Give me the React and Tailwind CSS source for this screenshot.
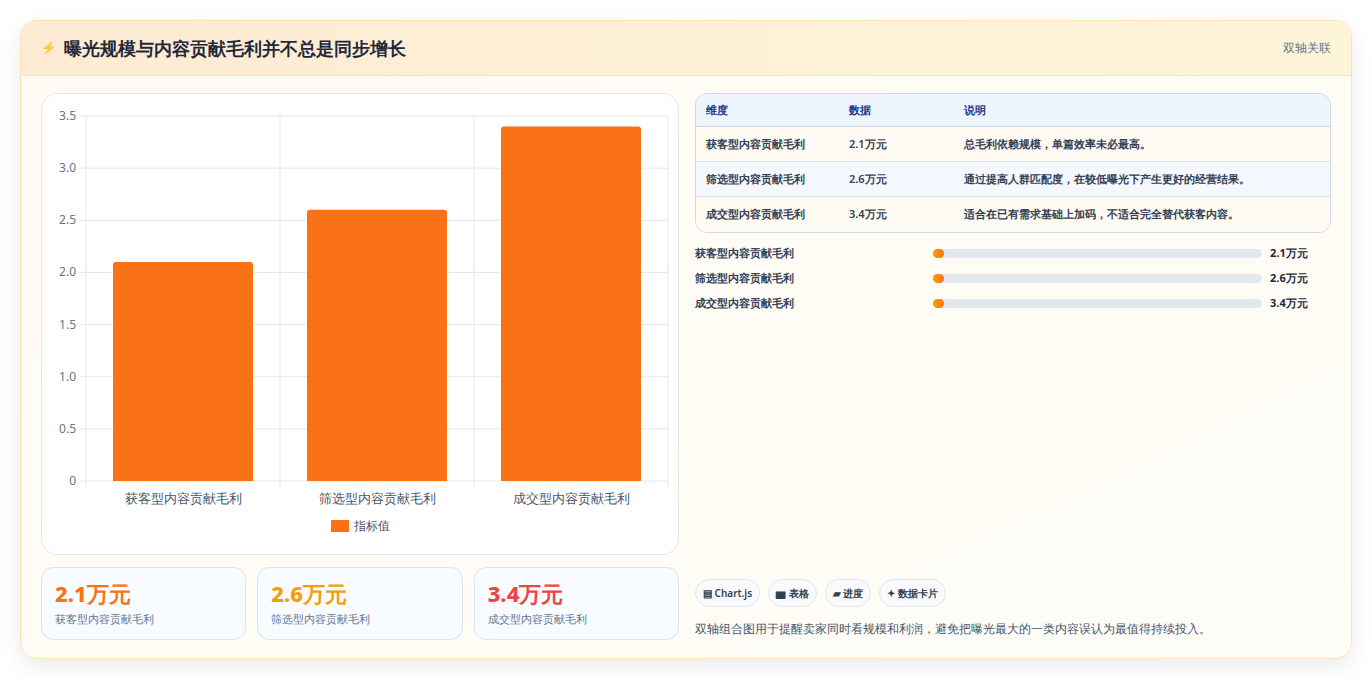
const rows = [
  { name: '获客型内容贡献毛利', v: 2.1, note: '总毛利依赖规模，单篇效率未必最高。', color: 'text-[#f97316]' },
  { name: '筛选型内容贡献毛利', v: 2.6, note: '通过提高人群匹配度，在较低曝光下产生更好的经营结果。', color: 'text-[#f59e0b]' },
  { name: '成交型内容贡献毛利', v: 3.4, note: '适合在已有需求基础上加码，不适合完全替代获客内容。', color: 'text-[#ef4444]' },
];

function Chart() {
  const L = 44, R = 626, T = 22, B = 387;
  const y = v => B - (v / 3.5) * (B - T);
  const ticks = [0, 0.5, 1, 1.5, 2, 2.5, 3, 3.5];
  const cw = (R - L) / 3;
  return (
    <svg width="638" height="461" className="block">
      {ticks.map(t => (
        <g key={t}>
          <line x1={L - 6} x2={R} y1={y(t)} y2={y(t)} stroke="#e2e8f0" />
          <text x={L - 10} y={y(t) + 4} textAnchor="end" fontSize="12" fill="#64748b">{t === 0 ? '0' : t.toFixed(1)}</text>
        </g>
      ))}
      {[0, 1, 2, 3].map(i => (
        <line key={i} x1={L + i * cw} x2={L + i * cw} y1={T} y2={B + 6} stroke="#e2e8f0" />
      ))}
      {rows.map((r, i) => (
        <g key={r.name}>
          <path d={`M${L + i * cw + 27} ${B} V${y(r.v) + 3} q0 -3 3 -3 H${L + i * cw + 164} q3 0 3 3 V${B} Z`} fill="#f97316" />
          <text x={L + i * cw + cw / 2} y={B + 22} textAnchor="middle" fontSize="12.5" fill="#475569">{r.name}</text>
        </g>
      ))}
      <rect x="289" y="426" width="18" height="12" fill="#f97316" />
      <text x="312" y="436" fontSize="12" fill="#475569">指标值</text>
    </svg>
  );
}

export default function App() {
  return (
    <div className="min-h-[678px] bg-white p-5 font-['Noto_Sans_CJK_SC','Noto_Sans',sans-serif]">
      <div className="rounded-2xl border border-[#fde2b8] bg-gradient-to-br from-[#fffaf3] to-[#fffdf8] shadow-[0_8px_24px_rgba(0,0,0,0.08)] overflow-hidden">
        <div className="h-[55px] flex items-center justify-between px-5 bg-gradient-to-r from-[#fdebd3] to-[#fef5d8] border-b border-[#fbe3c4]">
          <div className="flex items-center gap-2">
            <span className="text-[#6366f1] text-xs">⚡</span>
            <span className="text-[18px] font-bold text-[#1e293b]">曝光规模与内容贡献毛利并不总是同步增长</span>
          </div>
          <span className="text-[12px] text-[#64748b]">双轴关联</span>
        </div>
        <div className="flex gap-4 px-5 pt-[17px] pb-[18px]">
          <div className="w-[638px] flex flex-col gap-3">
            <div className="rounded-2xl border border-[#e2e8f0] bg-white h-[462px] overflow-hidden">
              <Chart />
            </div>
            <div className="grid grid-cols-3 gap-[11px]">
              {rows.map(r => (
                <div key={r.name} className="h-[73px] rounded-xl border border-[#dbe6f3] bg-[#f8fbff] px-[13px] pt-[10px]">
                  <div className={`text-[22px] font-extrabold leading-[30px] ${r.color}`}>{r.v}万元</div>
                  <div className="text-[11px] text-[#64748b] mt-[3px]">{r.name}</div>
                </div>
              ))}
            </div>
          </div>
          <div className="flex-1 flex flex-col">
            <div className="rounded-xl border border-[#cfd9e6] overflow-hidden text-[11px]">
              <div className="flex h-[33px] items-center bg-[#eef5ff] text-[#1e3a8a] font-semibold border-b border-[#cfd9e6]">
                <span className="w-[153px] pl-[10px]">维度</span><span className="w-[115px]">数据</span><span>说明</span>
              </div>
              {rows.map((r, i) => (
                <div key={r.name} className={`flex h-[35px] items-center text-[#334155] font-semibold ${i < 2 ? 'border-b border-[#dbe3ee]' : ''} ${i === 1 ? 'bg-[#f5f9ff]' : 'bg-[#fffaf2]'}`}>
                  <span className="w-[153px] pl-[10px]">{r.name}</span><span className="w-[115px]">{r.v}万元</span><span>{r.note}</span>
                </div>
              ))}
            </div>
            <div className="flex flex-col gap-[7px] mt-[11px]">
              {rows.map(r => (
                <div key={r.name} className="flex items-center h-[18px] text-[11px] font-semibold text-[#334155]">
                  <span className="w-[238px]">{r.name}</span>
                  <div className="w-[329px] h-[9px] rounded-full bg-[#e2e8f0]">
                    <div className="w-[11px] h-[9px] rounded-full bg-gradient-to-r from-[#f59e0b] to-[#f97316]" />
                  </div>
                  <span className="ml-2 font-bold text-[#1e293b]">{r.v}万元</span>
                </div>
              ))}
            </div>
            <div className="mt-auto flex gap-[8px]">
              {['▤ Chart.js', '▆ 表格', '▰ 进度', '✦ 数据卡片'].map(t => (
                <span key={t} className="h-[28px] px-[7px] flex items-center rounded-full border border-[#e2e8f0] bg-[#f8fafc] text-[10px] font-semibold text-[#334155]">{t}</span>
              ))}
            </div>
            <p className="mt-[13px] text-[12px] text-[#475569] mb-[2px]">双轴组合图用于提醒卖家同时看规模和利润，避免把曝光最大的一类内容误认为最值得持续投入。</p>
          </div>
        </div>
      </div>
    </div>
  );
}
